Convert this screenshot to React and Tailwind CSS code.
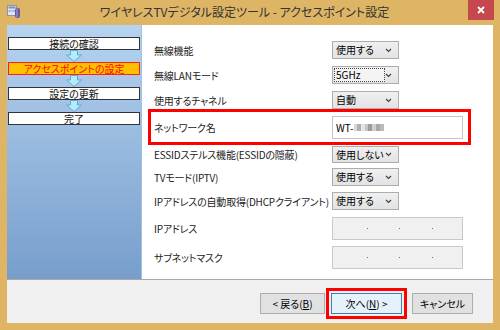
import React from 'react'

const jp = { fontFamily: '"Noto Sans CJK JP", "Noto Sans", sans-serif' }

function Chevron() {
  return (
    <svg width="7" height="5" viewBox="0 0 7 5" className="shrink-0">
      <path d="M1 1 L3.5 3.5 L6 1" fill="none" stroke="#444" strokeWidth="1.2" />
    </svg>
  )
}

function Select({ value, focus, h = 'h-[18px]' }) {
  return (
    <div className={`flex ${h} w-[67px] items-center justify-between border border-[#adadad] bg-gradient-to-b from-[#f0f0f0] to-[#e3e3e3] pl-[1px] pr-[6px]`}>
      {focus ? (
        <span className="flex h-[14px] w-[51px] items-center border border-dotted border-[#444] bg-[#f4f4f4] pl-[1px] text-[10px] leading-none text-black">{value}</span>
      ) : (
        <span className="pl-[2px] text-[10px] leading-none text-black">{value}</span>
      )}
      <Chevron />
    </div>
  )
}

function Row({ label, children, className = '' }) {
  return (
    <div className={`flex items-center ${className}`}>
      <div className="w-[178px] whitespace-nowrap text-[10px] tracking-[-0.2px] text-[#222]">{label}</div>
      {children}
    </div>
  )
}

function IpBox() {
  return (
    <div className="flex h-[23px] w-[131px] items-center border border-[#c9c9c9] bg-[#f0f0f0] pl-[34px]">
      <span className="h-[1px] w-[1px] bg-[#777]" />
      <span className="ml-[31px] h-[1px] w-[1px] bg-[#777]" />
      <span className="ml-[32px] h-[1px] w-[1px] bg-[#777]" />
    </div>
  )
}

function Arrow() {
  return (
    <div className="flex h-[12px] justify-center">
      <svg width="18" height="12" viewBox="0 0 18 12">
        <path d="M5.5 0.5 H12.5 V5 H16.5 L9 11.5 L1.5 5 H5.5 Z" fill="#b4ecfa" stroke="#62a8d6" strokeWidth="1" />
      </svg>
    </div>
  )
}

function Step({ label, active }) {
  return (
    <div
      className={`mx-[1px] flex h-[13px] items-center justify-center border text-[10px] leading-[11px] ${
        active ? 'border-[#ff2020] bg-[#ffc000] text-[#ff0000]' : 'border-[#333] bg-white text-[#111]'
      }`}
    >
      {label}
    </div>
  )
}

function Btn({ children, focus }) {
  return (
    <div
      className={`flex h-[21px] items-center justify-center border text-[10px] leading-none text-black ${
        focus ? 'w-[71px] border-[#3c7fb1] bg-[#e5f1fb]' : 'border-[#adadad] bg-[#e1e1e1]'
      }`}
    >
      {children}
    </div>
  )
}

export default function App() {
  return (
    <div className="flex h-[330px] w-[500px] flex-col overflow-hidden bg-[#deb564] [font-feature-settings:'palt']" style={jp}>
      {/* title bar */}
      <div className="flex h-[25px] items-start">
        <div className="ml-[7px] mt-[5px] w-[14px]">
          <svg width="14" height="13" viewBox="0 0 14 13">
            <rect x="0.5" y="0.5" width="9" height="10" fill="#dfe7f2" stroke="#8a96a8" />
            <rect x="1.5" y="1.5" width="7" height="2" fill="#6f8fc8" />
            <rect x="1.5" y="5" width="3" height="2" fill="#e0a0c0" />
            <rect x="5" y="5" width="3" height="2" fill="#a0c0e0" />
            <rect x="8" y="3" width="5" height="10" rx="2" fill="#6a5a9a" />
            <rect x="9" y="3.5" width="2" height="9" fill="#8c7cbc" />
          </svg>
        </div>
        <div className="flex-1 pt-[4px] text-center text-[12px] leading-[16px] text-[#333]">
          ワイヤレスTVデジタル設定ツール - アクセスポイント設定
        </div>
        <div className="mr-[6px] flex h-[20px] w-[26px] items-center justify-center bg-[#c7474f]">
          <svg width="8" height="8" viewBox="0 0 8 8">
            <path d="M1 1 L7 7 M7 1 L1 7" stroke="#fff" strokeWidth="1.8" />
          </svg>
        </div>
      </div>

      {/* client */}
      <div className="mx-[7px] flex h-[298px] flex-col">
        <div className="flex h-[254px]">
          {/* step panel */}
          <div className="w-[135px] border-r border-[#9cc0e6] bg-gradient-to-b from-[#b6d3f1] to-[#779ecb] pt-[12px]">
            <Step label="接続の確認" />
            <Arrow />
            <Step label="アクセスポイントの設定" active />
            <Arrow />
            <Step label="設定の更新" />
            <Arrow />
            <Step label="完了" />
          </div>

          {/* settings */}
          <div className="flex flex-1 flex-col bg-white pl-[12px] pt-[16px]">
            <Row label="無線機能">
              <Select value="使用する" />
            </Row>
            <Row label="無線LANモード" className="mt-[7px]">
              <Select value="5GHz" focus />
            </Row>
            <Row label="使用するチャネル" className="mt-[7px]">
              <Select value="自動" />
            </Row>
            <div className="ml-[-6px] flex h-[36px] w-[323px] items-center border-[3px] border-[#ff0000] pl-[3px]">
              <div className="w-[178px] text-[10px] tracking-[-0.2px] text-[#222]">ネットワーク名</div>
              <div className="flex h-[23px] w-[131px] items-center border border-[#c5c5c5] bg-white pl-[3px] text-[10px] text-black">
                <span>WT-</span>
                <span className="ml-[1px] flex h-[7px]">
                  <span className="w-[3px] bg-[#d8d8d8]" />
                  <span className="w-[4px] bg-[#aeb0b2]" />
                  <span className="w-[4px] bg-[#e4e4e4]" />
                  <span className="w-[3px] bg-[#c6c6c6]" />
                  <span className="w-[4px] bg-[#9c9c9e]" />
                  <span className="w-[4px] bg-[#d0d0d0]" />
                  <span className="w-[4px] bg-[#a8a8a8]" />
                  <span className="w-[4px] bg-[#bababa]" />
                </span>
              </div>
            </div>
            <Row label="ESSIDステルス機能(ESSIDの隠蔽)" className="mt-[1px]">
              <Select value="使用しない" h="h-[17px]" />
            </Row>
            <Row label="TVモード(IPTV)" className="mt-[5px]">
              <Select value="使用する" />
            </Row>
            <Row label="IPアドレスの自動取得(DHCPクライアント)" className="mt-[6px]">
              <Select value="使用する" />
            </Row>
            <Row label="IPアドレス" className="mt-[7px]">
              <IpBox />
            </Row>
            <Row label="サブネットマスク" className="mt-[6px]">
              <IpBox />
            </Row>
          </div>
        </div>

        {/* buttons */}
        <div className="flex h-[44px] items-center justify-end border-t border-[#a9a9a9] bg-[#f0f0f0] pr-[20px] pt-[4px]">
          <div className="w-[65px]">
            <Btn>
              &lt; 戻る(<span className="underline">B</span>)
            </Btn>
          </div>
          <div className="ml-[1px] border-[3px] border-[#ff0000] p-[2px]">
            <Btn focus>
              次へ(<span className="underline">N</span>) &gt;
            </Btn>
          </div>
          <div className="ml-[5px] w-[61px]">
            <Btn>キャンセル</Btn>
          </div>
        </div>
      </div>
    </div>
  )
}
